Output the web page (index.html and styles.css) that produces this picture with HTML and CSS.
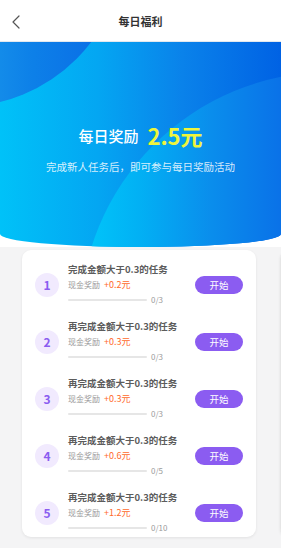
FILE: index.html
```html
<!DOCTYPE html>
<html lang="zh">
<head>
<meta charset="utf-8">
<title>每日福利</title>
<link rel="stylesheet" href="styles.css">
</head>
<body>
<header class="topbar">
  <svg class="back" width="10" height="14" viewBox="0 0 10 14"><path d="M8 1 L2 7 L8 13" fill="none" stroke="#555" stroke-width="1.2" stroke-linecap="round" stroke-linejoin="round"/></svg>
  <h1 class="title">每日福利</h1>
</header>
<section class="banner">
  <div class="blob-tl"></div>
  <div class="blob-br"></div>
  <div class="banner-text">
    <div class="reward-line"><span class="reward-label">每日奖励</span><span class="reward-amount">2.5元</span></div>
    <p class="reward-sub">完成新人任务后，即可参与每日奖励活动</p>
  </div>
</section>
<main class="content">
  <div class="cards">
    <div class="card">
      <div class="row">
        <div class="num">1</div>
        <div class="info">
          <div class="task">完成金额大于0.3的任务</div>
          <div class="cash">现金奖励<span class="amt">+0.2元</span></div>
          <div class="progress"><span class="bar"></span><span class="count">0/3</span></div>
        </div>
        <button class="start">开始</button>
      </div>
      <div class="row">
        <div class="num">2</div>
        <div class="info">
          <div class="task">再完成金额大于0.3的任务</div>
          <div class="cash">现金奖励<span class="amt">+0.3元</span></div>
          <div class="progress"><span class="bar"></span><span class="count">0/3</span></div>
        </div>
        <button class="start">开始</button>
      </div>
      <div class="row">
        <div class="num">3</div>
        <div class="info">
          <div class="task">再完成金额大于0.3的任务</div>
          <div class="cash">现金奖励<span class="amt">+0.3元</span></div>
          <div class="progress"><span class="bar"></span><span class="count">0/3</span></div>
        </div>
        <button class="start">开始</button>
      </div>
      <div class="row">
        <div class="num">4</div>
        <div class="info">
          <div class="task">再完成金额大于0.3的任务</div>
          <div class="cash">现金奖励<span class="amt">+0.6元</span></div>
          <div class="progress"><span class="bar"></span><span class="count">0/5</span></div>
        </div>
        <button class="start">开始</button>
      </div>
      <div class="row">
        <div class="num">5</div>
        <div class="info">
          <div class="task">再完成金额大于0.3的任务</div>
          <div class="cash">现金奖励<span class="amt">+1.2元</span></div>
          <div class="progress"><span class="bar"></span><span class="count">0/10</span></div>
        </div>
        <button class="start">开始</button>
      </div>
    </div>
    <div class="card card-next"></div>
  </div>
</main>
</body>
</html>
```
FILE: styles.css
```css
* { box-sizing: border-box; }
html, body { margin: 0; padding: 0; }
body {
  width: 281px;
  height: 548px;
  overflow: hidden;
  background: #ffffff;
  font-family: "Noto Sans CJK SC", "Noto Sans", sans-serif;
}
.topbar {
  position: relative;
  height: 42px;
  display: flex;
  align-items: center;
  justify-content: center;
  background: #fff;
  border-bottom: 1px solid #e3e8ee;
}
.back {
  position: absolute;
  left: 11px;
  top: 15px;
}
.title {
  margin: 0;
  font-size: 11px;
  font-weight: 700;
  color: #333;
  line-height: 16px;
}
.banner {
  position: relative;
  height: 205px;
  overflow: hidden;
  background: linear-gradient(90deg, #00c2f8 0%, #04a6f2 35%, #0a82ea 65%, #0062e4 100%);
  border-radius: 0 0 50% 50% / 0 0 13px 13px;
}
.blob-tl {
  position: absolute;
  left: -205px;
  top: -265px;
  width: 330px;
  height: 330px;
  border-radius: 50%;
  background: linear-gradient(90deg, #1690ea 58%, #0d80e8 72%, #0a6ee6 92%);
}
.blob-br {
  position: absolute;
  left: 80px;
  top: 30px;
  width: 500px;
  height: 500px;
  border-radius: 50%;
  background: linear-gradient(90deg, #00c8fa 0%, #02b0f4 12%, #0a8eec 26%, #0a72e8 40%, #0060e0 100%);
}
.banner-text {
  position: relative;
  padding-top: 80px;
  text-align: center;
}
.reward-line {
  height: 26px;
  display: flex;
  justify-content: center;
  align-items: center;
  gap: 9px;
}
.reward-label {
  font-size: 15px;
  color: #fff;
  font-weight: 500;
}
.reward-amount {
  font-size: 22px;
  font-weight: 700;
  color: #eef53c;
  line-height: 26px;
}
.reward-sub {
  margin: 12px 0 0;
  font-size: 10.5px;
  line-height: 14px;
  color: rgba(255, 255, 255, 0.85);
}
.content {
  background: #f4f4f5;
  height: 301px;
  padding-top: 3px;
  overflow: hidden;
}
.cards {
  display: flex;
  gap: 24px;
  padding-left: 22px;
}
.card {
  flex: 0 0 234px;
  background: #fff;
  border-radius: 9px;
  box-shadow: 0 1px 3px rgba(0, 0, 0, 0.08);
  padding: 0 13px 2px;
}
.card-next {
  height: 287px;
  border: 1px solid #e6e6e6;
}
.row {
  display: flex;
  align-items: center;
  height: 45px;
  margin-top: 12px;
}
.num {
  flex: 0 0 24px;
  height: 24px;
  border-radius: 50%;
  background: #f1eafe;
  color: #8a5cf0;
  font-size: 12px;
  font-weight: 700;
  display: flex;
  align-items: center;
  justify-content: center;
  margin-right: 9px;
}
.info {
  flex: 1;
  display: flex;
  flex-direction: column;
}
.task {
  font-size: 9.5px;
  line-height: 15px;
  font-weight: 700;
  color: #5c5c5c;
  white-space: nowrap;
}
.cash {
  font-size: 8px;
  line-height: 15px;
  color: #9a9a9a;
}
.amt {
  margin-left: 4px;
  font-size: 9px;
  color: #ff6a2b;
}
.progress {
  height: 15px;
  display: flex;
  align-items: center;
  gap: 4px;
}
.bar {
  width: 79px;
  height: 2px;
  background: #e6e6e6;
  border-radius: 1px;
}
.count {
  font-size: 8px;
  color: #9a9a9a;
}
.start {
  flex: 0 0 48px;
  height: 18px;
  border: 0;
  border-radius: 9px;
  background: #8b5cf1;
  color: #fff;
  font-family: inherit;
  font-size: 9.5px;
  padding: 0;
  line-height: 18px;
}
```
